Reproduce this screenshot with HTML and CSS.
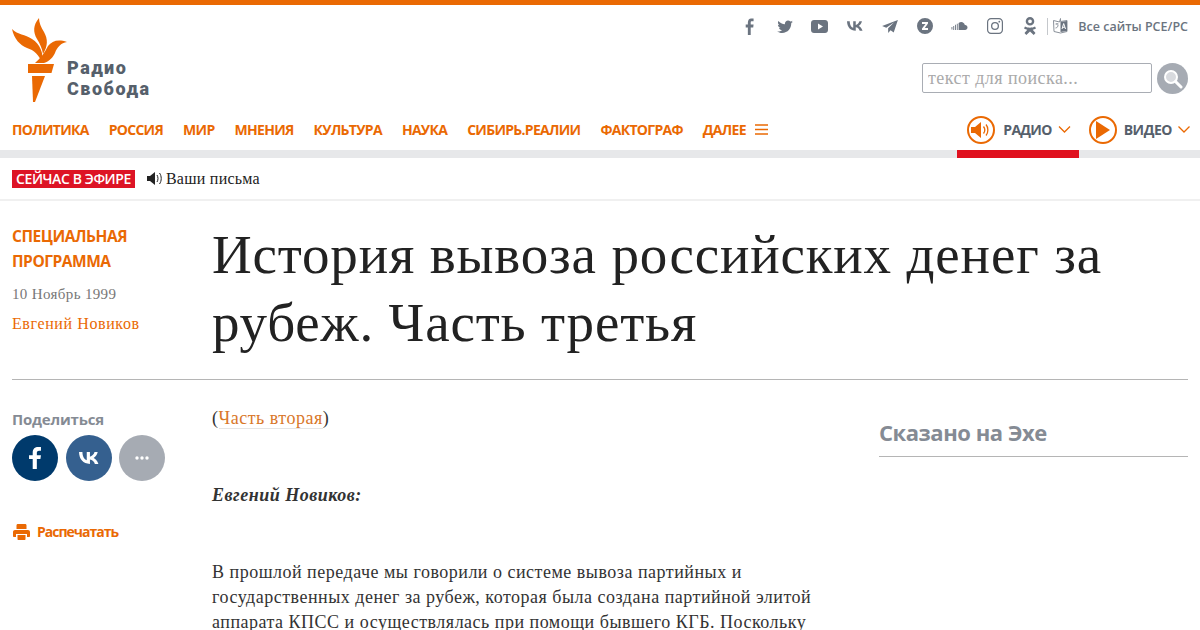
FILE: index.html
```html
<!DOCTYPE html>
<html lang="ru">
<head>
<meta charset="UTF-8" />
<title>История вывоза российских денег за рубеж. Часть третья</title>
<link rel="stylesheet" href="styles.css">
</head>
<body>
  <header class="header">
    <div class="top">
      <a class="logo" href="#">
        <svg class="logo-mark" width="56" height="86" viewBox="0 0 56 86">
          <path fill="#ea6903" d="M27 1C21 8 21 15 25 22C28 27 30 31 31 37C36 29 36 22 32 15C29 10 27 6 27 1z"/>
          <path fill="#ea6903" d="M0 12C2 22 8 28 15 31C22 33 27 38 30 46C32 36 28 27 20 22C13 17 6 18 0 12z"/>
          <path fill="#ea6903" d="M55 25C46 22 40 24 36 29C33 35 29 41 23 46L32 46C38 44 41 40 43 36C45 30 49 26 55 25z"/>
          <path fill="#ea6903" d="M16 47H42L39.500 56H16z"/>
          <path fill="#ea6903" d="M20 59H33L23 85H21z"/>
        </svg>
        <span class="logo-text"><span class="logo-line">Радио</span><span class="logo-line">Свобода</span></span>
      </a>
      <div class="top-right">
        <div class="socials">
          <span class="soc"><svg width="10" height="17" viewBox="0 0 14 18" preserveAspectRatio="none"><path d="M4 18V10H1V7h3V5c0-3 2-4.500 4.500-4.500H12v3H9.800C8.300 3.500 8 4 8 5v2h4l-.5 3H8v8z"/></svg></span>
          <span class="soc"><svg width="16" height="13" viewBox="0 0 17 14"><path d="M17 2c-.6.300-1.300.500-2 .600.700-.500 1.300-1.100 1.500-1.900-.7.400-1.400.700-2.200.800C13.700.900 12.800.500 11.800.500c-1.900 0-3.400 1.500-3.400 3.400 0 .300 0 .500.100.800C5.600 4.500 3.100 3.200 1.400 1.100 1.100 1.600.900 2.200.900 2.800c0 1.200.600 2.200 1.500 2.800-.6 0-1.100-.200-1.500-.400 0 1.700 1.200 3 2.700 3.400-.5.100-1 .100-1.500 0 .4 1.400 1.700 2.300 3.200 2.400C4 12 1.900 12.600 0 12.400 1.500 13.400 3.300 14 5.300 14c6.400 0 9.900-5.300 9.900-9.900v-.5c.7-.4 1.300-1 1.800-1.600z"/></svg></span>
          <span class="soc"><svg width="17" height="13" viewBox="0 0 17 13"><path fill-rule="evenodd" d="M3 0h11c1.700 0 3 1.300 3 3v7c0 1.700-1.300 3-3 3H3c-1.700 0-3-1.300-3-3V3c0-1.700 1.300-3 3-3zm4 3.500v6l5-3z"/></svg></span>
          <span class="soc"><svg width="16" height="10" viewBox="0 0 17 10"><path d="M9.300 10C3.500 10 .200 6.200 0 0h2.900c.1 4.600 2.100 6.500 3.700 6.900V0h2.700v3.900C11 3.700 12.600 1.900 13.200 0h2.700c-.4 2.400-2.200 4.200-3.500 5 1.300.6 3.300 2.200 4.100 5h-3c-.6-2-2.200-3.500-4.200-3.700V10z"/></svg></span>
          <span class="soc"><svg width="16" height="13" viewBox="0 0 17 14"><path d="M17 0L0 6.500l4.500 1.800L13 2.500 6.500 9v5l2.600-3 3.400 2.500z"/></svg></span>
          <span class="soc"><svg width="16" height="16" viewBox="0 0 16 16"><path fill-rule="evenodd" d="M8 0a8 8 0 1 1 0 16A8 8 0 0 1 8 0zM5 4v2h3.500L5 10.500V12h6v-2H7.800L11 5.500V4z"/></svg></span>
          <span class="soc"><svg width="17" height="8" viewBox="0 0 18 9"><path d="M8 1c1-.8 2-1 3-1 2 0 3.600 1.500 4 3.400 1.600-.2 3 1 3 2.800S16.700 9 15.300 9H8zM6 2h1v7H6zM4 3h1v6H4zM2 4.500h1V9H2zM0 5.500h1V8.500H0z"/></svg></span>
          <span class="soc"><svg width="16" height="16" viewBox="0 0 16 16"><path fill-rule="evenodd" d="M4 0h8c2.200 0 4 1.800 4 4v8c0 2.200-1.800 4-4 4H4c-2.200 0-4-1.800-4-4V4c0-2.200 1.800-4 4-4zm0 1.200C2.500 1.200 1.200 2.500 1.200 4v8c0 1.500 1.300 2.800 2.800 2.800h8c1.500 0 2.800-1.300 2.800-2.800V4c0-1.500-1.300-2.800-2.800-2.800zM8 4a4 4 0 1 1 0 8 4 4 0 0 1 0-8zm0 1.300a2.700 2.700 0 1 0 0 5.400 2.700 2.700 0 0 0 0-5.400zM12.300 2.800a.9.900 0 1 1 0 1.800.9.900 0 0 1 0-1.800z"/></svg></span>
          <span class="soc"><svg width="12" height="18" viewBox="0 0 12 18"><path fill-rule="evenodd" d="M6 0a4.300 4.300 0 1 1 0 8.600A4.300 4.300 0 0 1 6 0zm0 2.400a1.900 1.900 0 1 0 0 3.800 1.900 1.900 0 0 0 0-3.800zM1 9.500c2.800 1.600 7.200 1.600 10 0l1 2c-1 .7-2.200 1.100-3.300 1.300L11.500 16l-1.800 2L6 14.600 2.300 18 .5 16l2.800-3.200C2.200 12.600 1 12.200 0 11.500z"/></svg></span>
          <span class="soc-sep"></span>
          <svg class="sites-ico" width="15" height="16" viewBox="0 0 15 16"><path d="M.5 2.500l6 1.500 1-3.500 0 3 6.500-1v11l-6.500 1.500-6.500-1.500z" fill="none" stroke="#8a919a"/><path fill="#6b7480" d="M7.500 4l6.500-1v10l-6.500 1z"/><path fill="none" stroke="#fff" d="M9 11l1.700-5.500L12.500 11M9.700 9.300h2.100"/><path fill="none" stroke="#8a919a" d="M2.500 6h3M4 5v1.500M2.500 10c2 0 2.500-2 2.500-3"/></svg>
          <span class="all-sites">Все сайты РСЕ/РС</span>
        </div>
        <div class="search">
          <input class="search-input" type="text" placeholder="текст для поиска...">
          <button class="search-btn" aria-label="Поиск">
            <svg width="20" height="20" viewBox="0 0 20 20"><circle cx="8" cy="8" r="6" fill="#d8dade" stroke="#fff" stroke-width="2"/><path d="M12.500 12.500L18 18" stroke="#fff" stroke-width="3" stroke-linecap="round"/></svg>
          </button>
        </div>
      </div>
    </div>
    <nav class="nav">
      <a href="#">Политика</a>
      <a href="#">Россия</a>
      <a href="#">Мир</a>
      <a href="#">Мнения</a>
      <a href="#">Культура</a>
      <a href="#">Наука</a>
      <a href="#">Сибирь.Реалии</a>
      <a href="#">Фактограф</a>
      <a href="#" class="more">Далее
        <svg width="13" height="11" viewBox="0 0 13 11"><path d="M0 1h13M0 5.500h13M0 10h13" stroke="#ea6903" stroke-width="1.600"/></svg>
      </a>
      <div class="media">
        <a href="#" class="media-item media-radio">
          <span class="media-ico">
            <svg width="20" height="18" viewBox="0 0 20 18"><path fill="#ea6903" d="M0 6h4l6-5v16l-6-5H0z"/><path fill="none" stroke="#ea6903" stroke-width="1.300" d="M12.500 5.500c1.500 2 1.500 5 0 7M15 3.500c2.500 3 2.500 8 0 11"/></svg>
          </span>
          Радио
          <svg class="chev" width="13" height="7" viewBox="0 0 12 7"><path d="M.5.500L6 6 11.500.500" fill="none" stroke="#ea6903" stroke-width="1.300"/></svg>
        </a>
        <a href="#" class="media-item media-video">
          <span class="media-ico">
            <svg width="14" height="18" viewBox="0 0 14 18"><path fill="#ea6903" d="M0 0l14 9L0 18z"/></svg>
          </span>
          Видео
          <svg class="chev" width="12" height="7" viewBox="0 0 12 7"><path d="M.5.500L6 6 11.500.500" fill="none" stroke="#ea6903" stroke-width="1.300"/></svg>
        </a>
      </div>
    </nav>
    <div class="nav-line"><span class="nav-active"></span></div>
  </header>

  <div class="onair">
    <span class="onair-label">Сейчас в эфире</span>
    <svg width="16" height="13" viewBox="0 0 16 13"><path fill="#222" d="M0 4h3l5-4v13l-5-4H0z"/><path fill="none" stroke="#222" d="M10 3c1.300 2 1.300 5 0 7M12.500 1c2.300 3 2.300 8 0 11"/></svg>
    <span class="onair-text">Ваши письма</span>
  </div>

  <div class="title-row">
    <div class="meta">
      <a class="meta-cat" href="#">Специальная программа</a>
      <div class="meta-date">10 Ноябрь 1999</div>
      <a class="meta-author" href="#">Евгений Новиков</a>
    </div>
    <h1 class="title">История вывоза российских денег за рубеж. Часть третья</h1>
  </div>

  <div class="content">
    <aside class="share">
      <div class="share-label">Поделиться</div>
      <div class="share-btns">
        <a href="#" class="share-btn fb"><svg width="12" height="22" viewBox="0 0 13 24"><path fill="#fff" d="M4 24V13H0V9h4V6c0-4 2.500-6 6-6h3v4h-2C9 4 8.500 5 8.500 6.500V9H13l-.6 4H8.500v11z"/></svg></a>
        <a href="#" class="share-btn vk"><svg width="20" height="12" viewBox="0 0 17 10"><path fill="#fff" d="M9.300 10C3.500 10 .200 6.200 0 0h2.900c.1 4.600 2.100 6.500 3.700 6.900V0h2.700v3.900C11 3.700 12.600 1.900 13.200 0h2.700c-.4 2.400-2.200 4.200-3.500 5 1.300.6 3.300 2.200 4.100 5h-3c-.6-2-2.200-3.500-4.200-3.700V10z"/></svg></a>
        <a href="#" class="share-btn more-btn"><svg width="14" height="4" viewBox="0 0 14 4"><circle cx="2" cy="2" r="1.700" fill="#fff"/><circle cx="7" cy="2" r="1.700" fill="#fff"/><circle cx="12" cy="2" r="1.700" fill="#fff"/></svg></a>
      </div>
      <a href="#" class="print">
        <svg width="17" height="16" viewBox="0 0 17 16"><path fill="#ea6903" fill-rule="evenodd" d="M5 0h7c1 0 1.500.5 1.500 1.500V5h-10V1.500C3.500.5 4 0 5 0zM2 6h13c1.100 0 2 .9 2 2v4c0 .6-.4 1-1 1h-2v-3H3v3H1c-.6 0-1-.4-1-1V8c0-1.100.9-2 2-2zM4.500 11h8v4c0 .6-.4 1-1 1h-6c-.6 0-1-.4-1-1z"/></svg>
        Распечатать
      </a>
    </aside>
    <article class="article">
      <p class="article-first">(<a href="#">Часть вторая</a>)</p>
      <p class="article-speaker">Евгений Новиков:</p>
      <p class="article-body">В прошлой передаче мы говорили о системе вывоза партийных и государственных денег за рубеж, которая была создана партийной элитой аппарата КПСС и осуществлялась при помощи бывшего КГБ. Поскольку</p>
    </article>
    <aside class="side">
      <h2 class="side-title">Сказано на Эхе</h2>
    </aside>
  </div>
</body>
</html>
```
FILE: styles.css
```css
html, body {
  height: 630px;
  overflow: hidden;
}
body {
  margin: 0;
  font-family: "Liberation Serif", serif;
  color: #222;
  background: #fff;
  border-top: 5px solid #ea6903;
  box-sizing: border-box;
}
a {
  text-decoration: none;
}
.top {
  display: flex;
  justify-content: space-between;
  height: 100px;
  padding: 0 12px;
}
.logo {
  display: flex;
  align-items: flex-end;
  margin-top: 12px;
  height: 86px;
}
.logo-mark {
  flex: none;
}
.logo-text {
  font-family: Roboto, sans-serif;
  font-weight: 900;
  font-size: 18px;
  letter-spacing: 1.500px;
  color: #56606b;
  margin: 0 0 4px -1px;
}
.logo-line {
  display: block;
  height: 21px;
  line-height: 21px;
}
.top-right {
  display: flex;
  flex-direction: column;
  align-items: flex-end;
}
.socials {
  display: flex;
  align-items: center;
  height: 18px;
  margin-top: 12px;
}
.soc {
  width: 35px;
  height: 18px;
  display: flex;
  align-items: center;
  justify-content: center;
  fill: #6b7480;
}
.soc-sep {
  width: 1px;
  height: 17px;
  background: #c5c8cc;
  margin-right: 5px;
}
.sites-ico {
  margin-right: 10px;
}
.all-sites {
  font-family: "Open Sans", sans-serif;
  font-weight: 600;
  font-size: 12.500px;
  color: #6b7480;
}
.search {
  display: flex;
  align-items: flex-start;
  margin-top: 28px;
  gap: 5px;
}
.search-input {
  width: 230px;
  height: 30px;
  box-sizing: border-box;
  border: 1px solid #a9adb4;
  border-radius: 2px;
  padding: 0 5px;
  font-family: "Liberation Serif", serif;
  font-size: 18px;
  letter-spacing: 0.450px;
  outline: none;
}
.search-input::placeholder {
  color: #aaa;
}
.search-btn {
  width: 31px;
  height: 31px;
  border: none;
  border-radius: 50%;
  background: #a6abb3;
  padding: 0;
  display: flex;
  align-items: center;
  justify-content: center;
}
.nav {
  display: flex;
  align-items: center;
  gap: 20px;
  height: 45px;
  padding: 4px 10px 0 12px;
  box-sizing: border-box;
  font-family: "Open Sans", sans-serif;
  font-weight: 700;
  font-size: 14px;
  text-transform: uppercase;
}
.nav a {
  color: #ea6903;
  letter-spacing: -0.700px;
}
.nav .more {
  display: flex;
  align-items: center;
  gap: 9px;
}
.media {
  margin-left: auto;
  display: flex;
  gap: 18px;
}
.nav .media-item {
  display: flex;
  align-items: center;
  color: #56606b;
  gap: 7px;
}
.nav .media-radio {
  letter-spacing: -0.700px;
}
.nav .media-video {
  letter-spacing: -0.450px;
}
.media-ico {
  width: 24px;
  height: 24px;
  border: 2px solid #ea6903;
  border-radius: 50%;
  display: flex;
  align-items: center;
  justify-content: center;
}
.media-radio .media-ico {
  margin-right: 1px;
}
.chev {
  margin-left: -1px;
}
.nav-line {
  height: 8px;
  background: #e7e8ea;
  position: relative;
}
.nav-active {
  position: absolute;
  left: 957px;
  top: 0;
  width: 122px;
  height: 8px;
  background: #e0101e;
}
.onair {
  display: flex;
  align-items: center;
  height: 41px;
  padding: 0 12px;
  border-bottom: 2px solid #f0f0f0;
  gap: 12px;
}
.onair-label {
  background: #dd1425;
  color: #fff;
  font-family: "Open Sans", sans-serif;
  font-weight: 600;
  font-size: 14px;
  line-height: 18px;
  padding: 0 4px;
  text-transform: uppercase;
  letter-spacing: -0.400px;
}
.onair-text {
  font-size: 16px;
  letter-spacing: 0.250px;
  margin-left: -9px;
}
.title-row {
  display: flex;
  margin: 0 12px;
  padding: 20px 0 22px;
  border-bottom: 1px solid #b5b5b5;
}
.meta {
  width: 200px;
  flex: none;
  padding-top: 3px;
}
.meta-cat {
  display: block;
  width: 130px;
  font-family: "Open Sans", sans-serif;
  font-weight: 700;
  font-size: 15.500px;
  line-height: 25px;
  color: #ea6903;
  text-transform: uppercase;
  letter-spacing: -0.450px;
}
.meta-date {
  font-size: 15px;
  letter-spacing: 0.350px;
  color: #777;
  margin-top: 12px;
}
.meta-author {
  display: block;
  font-size: 16px;
  letter-spacing: 0.600px;
  color: #ea6903;
  margin-top: 12px;
}
.title {
  margin: 0;
  font-weight: 400;
  font-size: 55px;
  line-height: 68px;
  letter-spacing: 0.840px;
  color: #222;
}
.content {
  display: flex;
  padding: 0 12px;
}
.share {
  width: 200px;
  flex: none;
  padding-top: 29px;
}
.share-label {
  font-family: "Open Sans", sans-serif;
  font-weight: 700;
  font-size: 15px;
  letter-spacing: -0.200px;
  line-height: 20px;
  color: #858b94;
}
.share-btns {
  display: flex;
  gap: 7.500px;
  margin-top: 6px;
}
.share-btn {
  width: 46px;
  height: 46px;
  border-radius: 50%;
  display: flex;
  align-items: center;
  justify-content: center;
}
.fb {
  background: #003a6c;
}
.vk {
  background: #35608f;
}
.more-btn {
  background: #a6abb3;
}
.print {
  display: flex;
  align-items: center;
  gap: 7px;
  margin-top: 41px;
  padding-left: 1px;
  font-family: "Open Sans", sans-serif;
  font-weight: 700;
  font-size: 14px;
  letter-spacing: -1px;
  color: #ea6903;
}
.article {
  width: 620px;
  flex: none;
  font-size: 18px;
  line-height: 25px;
  letter-spacing: 0.500px;
  color: #333;
}
.article p {
  margin: 0;
}
.article-first {
  padding-top: 26px;
}
.article-first a {
  color: #d9772a;
  border-bottom: 1px solid #e5e5e5;
}
.article .article-speaker {
  margin-top: 52px;
  font-weight: 700;
  font-style: italic;
}
.article .article-body {
  margin-top: 52px;
}
.side {
  margin-left: 47px;
  flex: 1;
}
.side-title {
  margin: 36px 0 0;
  padding-bottom: 8px;
  border-bottom: 1px solid #b5b5b5;
  font-family: "Open Sans", sans-serif;
  font-weight: 700;
  font-size: 22px;
  letter-spacing: -0.450px;
  line-height: 32px;
  color: #858b94;
}
```
